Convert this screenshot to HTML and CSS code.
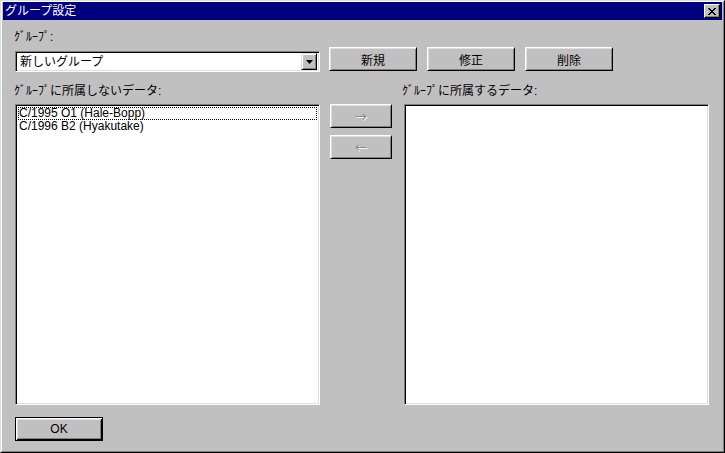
FILE: index.html
```html
<!DOCTYPE html>
<html lang="ja">
<head>
    <meta charset="UTF-8">
    <title>グループ設定</title>
    <link rel="stylesheet" href="styles.css">
</head>
<body>
    <div class="window">
        <div class="frame">
            <div class="titlebar">
                <span class="title">グループ設定</span>
                <button class="close" type="button">
                    <svg width="8" height="7" viewBox="0 0 8 7">
                        <path d="M0 0h2v1h1v1h2v-1h1v-1h2v1h-1v1h-1v1h-1v1h1v1h1v1h1v1h-2v-1h-1v-1h-2v1h-1v1h-2v-1h1v-1h1v-1h1v-1h-1v-1h-1z" fill="#000"/>
                    </svg>
                </button>
            </div>

            <div class="content">
                <div class="field-label">ｸﾞﾙｰﾌﾟ:</div>
                <div class="top-row">
                    <div class="combo sunken">
                        <span class="combo-text">新しいグループ</span>
                        <span class="drop-btn">
                            <svg width="7" height="4" viewBox="0 0 7 4"><path d="M0 0h7l-3.5 4z" fill="#000"/></svg>
                        </span>
                    </div>
                    <button class="btn first" type="button">新規</button>
                    <button class="btn" type="button">修正</button>
                    <button class="btn" type="button">削除</button>
                </div>

                <div class="lists">
                    <div class="list-label left">ｸﾞﾙｰﾌﾟに所属しないデータ:</div>
                    <div class="list-label right">ｸﾞﾙｰﾌﾟに所属するデータ:</div>

                    <div class="listbox sunken">
                        <div class="item focused">C/1995 O1 (Hale-Bopp)</div>
                        <div class="item">C/1996 B2 (Hyakutake)</div>
                    </div>
                    <div class="arrows">
                        <button class="btn arrow" type="button" disabled>→</button>
                        <button class="btn arrow" type="button" disabled>←</button>
                    </div>
                    <div class="listbox sunken"></div>
                </div>

                <div class="bottom">
                    <button class="btn default" type="button">OK</button>
                </div>
            </div>
        </div>
    </div>
</body>
</html>
```

FILE: styles.css
```css
* { margin: 0; padding: 0; box-sizing: border-box; }
body {
    width: 725px;
    height: 453px;
    overflow: hidden;
    background: #c0c0c0;
    color: #000;
    font-family: "Liberation Sans", "Noto Sans CJK JP", sans-serif;
    font-size: 12px;
}
.window {
    width: 725px;
    height: 453px;
    background: #c0c0c0;
    border: 1px solid;
    border-color: #dfdfdf #000 #000 #dfdfdf;
}
.frame {
    height: 100%;
    padding: 0 1px;
    border: 1px solid;
    border-color: #fff #808080 #808080 #fff;
}
.titlebar {
    height: 18px;
    background: #000080;
    color: #fff;
    display: flex;
    align-items: center;
    justify-content: space-between;
    padding: 0 2px 0 2px;
}
.title {
    font-size: 12px;
    line-height: 14px;
}
.close {
    width: 16px;
    height: 14px;
    display: flex;
    align-items: center;
    justify-content: center;
    background: #c0c0c0;
    border: 1px solid;
    border-color: #fff #000 #000 #fff;
    box-shadow: inset -1px -1px #808080;
}
.content {
    padding: 10px 13px 0 12px;
}
.field-label {
    height: 14px;
    line-height: 14px;
    margin-left: -1px;
    margin-bottom: 3px;
}
.top-row {
    display: flex;
    align-items: flex-start;
}
.sunken {
    background: #fff;
    border: 1px solid;
    border-color: #808080 #fff #fff #808080;
    box-shadow: inset 1px 1px #000, inset -1px -1px #dfdfdf;
}
.combo {
    width: 305px;
    height: 21px;
    margin-top: 4px;
    margin-right: 9px;
    padding: 2px 2px 2px 4px;
    display: flex;
    align-items: center;
    justify-content: space-between;
}
.combo-text {
    line-height: 14px;
}
.drop-btn {
    width: 16px;
    height: 17px;
    display: flex;
    align-items: center;
    justify-content: center;
    background: #c0c0c0;
    border: 1px solid;
    border-color: #dfdfdf #000 #000 #dfdfdf;
    box-shadow: inset 1px 1px #fff, inset -1px -1px #808080;
}
.btn {
    width: 88px;
    height: 24px;
    margin-left: 10px;
    background: #c0c0c0;
    color: #000;
    font: inherit;
    border: 1px solid;
    border-color: #fff #000 #000 #fff;
    box-shadow: inset 1px 1px #dfdfdf, inset -1px -1px #808080;
}
.btn.first {
    margin-left: 0;
}
.lists {
    display: grid;
    grid-template-columns: 305px 84px 305px;
    grid-template-rows: 14px 301px;
    row-gap: 6px;
    margin-top: 12px;
}
.list-label {
    line-height: 14px;
    white-space: nowrap;
}
.list-label.left {
    grid-column: 1;
    margin-left: -1px;
}
.list-label.right {
    grid-column: 3;
    margin-left: -2px;
}
.listbox {
    padding: 2px;
}
.item {
    height: 13px;
    line-height: 13px;
    padding-left: 1px;
    white-space: nowrap;
}
.item.focused {
    outline: 1px dotted #000;
    outline-offset: -1px;
}
.arrows {
    display: flex;
    flex-direction: column;
    gap: 7px;
    padding: 0 12px 0 10px;
}
.btn.arrow {
    width: 62px;
    margin-left: 0;
    color: #808080;
    font-family: "Noto Sans CJK JP", sans-serif;
    font-size: 12px;
    text-shadow: 1px 1px #fff;
}
.bottom {
    margin-top: 12px;
}
.btn.default {
    margin-left: 0;
    border: 1px solid #000;
    box-shadow: inset 1px 1px #fff, inset -1px -1px #000, inset 2px 2px #dfdfdf, inset -2px -2px #808080;
}
```
